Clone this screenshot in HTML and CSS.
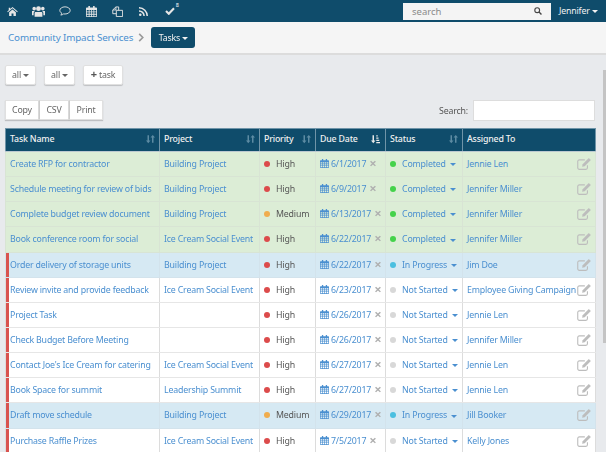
FILE: index.html
```html
<!DOCTYPE html>
<html lang="en">
<head>
<meta charset="utf-8">
<title>Tasks</title>
<link rel="stylesheet" href="styles.css">
</head>
<body>
<svg class="defs" width="0" height="0" aria-hidden="true">
  <symbol id="cal" viewBox="0 0 14 14"><path fill="currentColor" fill-rule="evenodd" d="M3 0h2v2h4V0h2v2h2a1 1 0 0 1 1 1v10a1 1 0 0 1-1 1H1a1 1 0 0 1-1-1V3a1 1 0 0 1 1-1h2zM1 5v2h2.500V5zm3.500 0v2h2V5zm3 0v2h2V5zm3 0v2H13V5zM1 8v2h2.500V8zm3.500 0v2h2V8zm3 0v2h2V8zm3 0v2H13V8zM1 11v2h2.500v-2zm3.500 0v2h2v-2zm3 0v2h2v-2zm3 0v2H13v-2z"/></symbol>
  <symbol id="edit" viewBox="0 0 16 14"><path fill="none" stroke="currentColor" stroke-width="1.300" d="M12 8.500V11.500a1.800 1.800 0 0 1-1.800 1.800H2.500A1.800 1.800 0 0 1 .7 11.500V4a1.800 1.800 0 0 1 1.800-1.800H9"/><path fill="currentColor" d="M13.600 0 16 2.400 8.800 9.600 5.800 10.200 6.400 7.200z"/></symbol>
  <symbol id="sort" viewBox="0 0 12 12"><path fill="currentColor" d="M2 1h2v7h2L3 11.500 0 8h2zM8 11V4H6l3-3.500L12 4h-2v7z"/></symbol>
</svg>

<header class="topbar">
  <nav class="topicons">
    <a class="topicon"><svg viewBox="0 0 14 12" width="11" height="9"><path fill="currentColor" d="M7 0 14 6l-.8.900L7 1.700.8 6.900 0 6l2-1.700V1h2v1.600zM2.500 7 7 3.200 11.500 7v5H8.300V8.500H5.700V12H2.500z"/></svg></a>
    <a class="topicon"><svg viewBox="0 0 16 13" width="13" height="11"><g fill="currentColor"><circle cx="8" cy="3" r="3"/><circle cx="2.700" cy="3" r="2.200"/><circle cx="13.300" cy="3" r="2.200"/><path d="M4 7h8l.8 1v5H3.200V8zM0 6h3.300L2 8v3H0zM16 6h-3.300L14 8v3h2z"/></g></svg></a>
    <a class="topicon"><svg viewBox="0 0 14 12" width="12" height="10"><path fill="none" stroke="currentColor" stroke-width="1.100" d="M7 1C3.500 1 .8 2.900.8 5.300c0 1.400.9 2.600 2.400 3.400-.2.900-.7 1.600-1.300 2.200 1.300-.1 2.500-.6 3.400-1.400.5.100 1.100.1 1.700.1 3.500 0 6.200-1.900 6.200-4.300S10.500 1 7 1z"/></svg></a>
    <a class="topicon"><svg viewBox="0 0 14 14" width="11" height="11"><use href="#cal"/></svg></a>
    <a class="topicon"><svg viewBox="0 0 14 14" width="11" height="11"><path fill="none" stroke="currentColor" stroke-width="1.200" d="M5.500 5.500h8v8h-8z M8.500 5.500V1.200H5L1 5v4.800h4.500 M5 1.200V5H1"/></svg></a>
    <a class="topicon"><svg viewBox="0 0 12 12" width="9" height="9"><g fill="none" stroke="currentColor" stroke-width="2"><path d="M0 5.200a6.800 6.800 0 0 1 6.800 6.800"/><path d="M0 1a11 11 0 0 1 11 11"/></g><circle cx="1.700" cy="10.300" r="1.700" fill="currentColor"/></svg></a>
    <a class="topicon"><svg viewBox="0 0 12 10" width="10" height="8"><path fill="none" stroke="currentColor" stroke-width="2.600" d="M1 5l3.500 3.500L11 1.500"/></svg><sup class="topcount">8</sup></a>
  </nav>
  <form class="topsearch">
    <span class="topsearch-text">search</span>
    <svg viewBox="0 0 10 10" width="8" height="8"><circle cx="4" cy="4" r="3" fill="none" stroke="#444" stroke-width="1.400"/><path d="M6 6l3.300 3.300" stroke="#444" stroke-width="1.700"/></svg>
  </form>
  <a class="user">Jennifer<span class="caret caret-white"></span></a>
</header>

<div class="crumbs">
  <a class="crumb-link">Community Impact Services</a>
  <svg class="crumb-sep" viewBox="0 0 6 10" width="6" height="9"><path fill="none" stroke="#9a9a9a" stroke-width="1.800" d="M1 1l4 4-4 4"/></svg>
  <button class="tasks-btn">Tasks<span class="caret caret-white"></span></button>
</div>

<main class="content">
  <div class="filters">
    <button class="btn btn-all">all<span class="caret"></span></button>
    <button class="btn btn-all">all<span class="caret"></span></button>
    <button class="btn btn-task"><b class="plus">+</b> task</button>
  </div>
  <div class="tools">
    <div class="btn-group">
      <button class="gbtn">Copy</button><button class="gbtn">CSV</button><button class="gbtn">Print</button>
    </div>
    <label class="searchbox">Search:<input class="searchinput" type="text"></label>
  </div>

  <table class="tasks">
    <colgroup>
      <col class="c1"><col class="c2"><col class="c3"><col class="c4"><col class="c5"><col class="c6">
    </colgroup>
    <thead>
      <tr>
        <th>Task Name<svg class="sort"><use href="#sort"/></svg></th>
        <th>Project<svg class="sort"><use href="#sort"/></svg></th>
        <th>Priority<svg class="sort"><use href="#sort"/></svg></th>
        <th>Due Date<svg class="sort sort-on" viewBox="0 0 12 12"><path fill="currentColor" d="M2 1h2v7h2L3 11.500 0 8h2zM7 1h2v1.500H7zM7 4h3v1.500H7zM7 7h4v1.500H7zM7 10h5v1.500H7z"/></svg></th>
        <th>Status<svg class="sort"><use href="#sort"/></svg></th>
        <th>Assigned To</th>
      </tr>
    </thead>
    <tbody>
      <tr class="done"><td><a>Create RFP for contractor</a></td><td><a>Building Project</a></td><td><i class="dot red"></i>High</td><td><svg class="cal"><use href="#cal"/></svg><a>6/1/2017</a><span class="x">×</span></td><td><i class="dot green"></i><a>Completed</a><span class="caret caret-blue"></span></td><td class="who"><a>Jennie Len</a><svg class="edit"><use href="#edit"/></svg></td></tr>
      <tr class="done"><td><a>Schedule meeting for review of bids</a></td><td><a>Building Project</a></td><td><i class="dot red"></i>High</td><td><svg class="cal"><use href="#cal"/></svg><a>6/9/2017</a><span class="x">×</span></td><td><i class="dot green"></i><a>Completed</a><span class="caret caret-blue"></span></td><td class="who"><a>Jennifer Miller</a><svg class="edit"><use href="#edit"/></svg></td></tr>
      <tr class="done"><td><a>Complete budget review document</a></td><td><a>Building Project</a></td><td><i class="dot orange"></i>Medium</td><td><svg class="cal"><use href="#cal"/></svg><a>6/13/2017</a><span class="x">×</span></td><td><i class="dot green"></i><a>Completed</a><span class="caret caret-blue"></span></td><td class="who"><a>Jennifer Miller</a><svg class="edit"><use href="#edit"/></svg></td></tr>
      <tr class="done"><td><a>Book conference room for social</a></td><td><a>Ice Cream Social Event</a></td><td><i class="dot red"></i>High</td><td><svg class="cal"><use href="#cal"/></svg><a>6/22/2017</a><span class="x">×</span></td><td><i class="dot green"></i><a>Completed</a><span class="caret caret-blue"></span></td><td class="who"><a>Jennifer Miller</a><svg class="edit"><use href="#edit"/></svg></td></tr>
      <tr class="late prog"><td><a>Order delivery of storage units</a></td><td><a>Building Project</a></td><td><i class="dot red"></i>High</td><td><svg class="cal"><use href="#cal"/></svg><a>6/22/2017</a><span class="x">×</span></td><td><i class="dot blue"></i><a>In Progress</a><span class="caret caret-blue"></span></td><td class="who"><a>Jim Doe</a><svg class="edit"><use href="#edit"/></svg></td></tr>
      <tr class="late"><td><a>Review invite and provide feedback</a></td><td><a>Ice Cream Social Event</a></td><td><i class="dot red"></i>High</td><td><svg class="cal"><use href="#cal"/></svg><a>6/23/2017</a><span class="x">×</span></td><td><i class="dot grey"></i><a>Not Started</a><span class="caret caret-blue"></span></td><td class="who"><a>Employee Giving Campaign</a><svg class="edit"><use href="#edit"/></svg></td></tr>
      <tr class="late"><td><a>Project Task</a></td><td></td><td><i class="dot red"></i>High</td><td><svg class="cal"><use href="#cal"/></svg><a>6/26/2017</a><span class="x">×</span></td><td><i class="dot grey"></i><a>Not Started</a><span class="caret caret-blue"></span></td><td class="who"><a>Jennie Len</a><svg class="edit"><use href="#edit"/></svg></td></tr>
      <tr class="late"><td><a>Check Budget Before Meeting</a></td><td></td><td><i class="dot red"></i>High</td><td><svg class="cal"><use href="#cal"/></svg><a>6/26/2017</a><span class="x">×</span></td><td><i class="dot grey"></i><a>Not Started</a><span class="caret caret-blue"></span></td><td class="who"><a>Jennifer Miller</a><svg class="edit"><use href="#edit"/></svg></td></tr>
      <tr class="late"><td><a>Contact Joe's Ice Cream for catering</a></td><td><a>Ice Cream Social Event</a></td><td><i class="dot red"></i>High</td><td><svg class="cal"><use href="#cal"/></svg><a>6/27/2017</a><span class="x">×</span></td><td><i class="dot grey"></i><a>Not Started</a><span class="caret caret-blue"></span></td><td class="who"><a>Jennie Len</a><svg class="edit"><use href="#edit"/></svg></td></tr>
      <tr class="late"><td><a>Book Space for summit</a></td><td><a>Leadership Summit</a></td><td><i class="dot red"></i>High</td><td><svg class="cal"><use href="#cal"/></svg><a>6/27/2017</a><span class="x">×</span></td><td><i class="dot grey"></i><a>Not Started</a><span class="caret caret-blue"></span></td><td class="who"><a>Jennie Len</a><svg class="edit"><use href="#edit"/></svg></td></tr>
      <tr class="late prog"><td><a>Draft move schedule</a></td><td><a>Building Project</a></td><td><i class="dot orange"></i>Medium</td><td><svg class="cal"><use href="#cal"/></svg><a>6/29/2017</a><span class="x">×</span></td><td><i class="dot blue"></i><a>In Progress</a><span class="caret caret-blue"></span></td><td class="who"><a>Jill Booker</a><svg class="edit"><use href="#edit"/></svg></td></tr>
      <tr class="late"><td><a>Purchase Raffle Prizes</a></td><td><a>Ice Cream Social Event</a></td><td><i class="dot red"></i>High</td><td><svg class="cal"><use href="#cal"/></svg><a>7/5/2017</a><span class="x">×</span></td><td><i class="dot grey"></i><a>Not Started</a><span class="caret caret-blue"></span></td><td class="who"><a>Kelly Jones</a><svg class="edit"><use href="#edit"/></svg></td></tr>
    </tbody>
  </table>
</main>
<div class="scrollthumb"></div>
</body>
</html>
```

FILE: styles.css
```css
* { box-sizing: border-box; }
html, body { margin: 0; padding: 0; height: 100%; overflow: hidden; }
body {
  font-family: "Noto Sans", "Open Sans", sans-serif;
  font-size: 8.800px;
  letter-spacing: -.18px;
  color: #555;
  background: #e8eaed;
  position: relative;
  filter: blur(.3px);
}
.defs { position: absolute; }
a { color: #4a8fd0; text-decoration: none; }

.topbar {
  height: 22px;
  background: #0f4c6b;
  display: flex;
  align-items: center;
}
.topicons { display: flex; flex: 1; margin-left: -1px; }
.topicon {
  width: 26.300px;
  height: 22px;
  display: flex;
  align-items: center;
  justify-content: center;
  color: #e6e6e6;
  position: relative;
}
.topcount {
  position: absolute;
  left: 19px;
  top: 2px;
  font-size: 5.500px;
  line-height: 7px;
  color: #fff;
}
.topsearch {
  width: 148px;
  height: 17px;
  margin: 0;
  background: #f4f4f4;
  display: flex;
  align-items: center;
  justify-content: space-between;
  padding: 0 9px;
}
.topsearch-text { font-size: 9.500px; color: #8a8a8a; letter-spacing: 0; }
.user { color: #f2f2f2; width: 55px; padding-left: 8px; white-space: nowrap; }
.caret {
  display: inline-block;
  margin-left: 2px;
  vertical-align: middle;
  border-left: 3px solid transparent;
  border-right: 3px solid transparent;
  border-top: 3px solid #666;
}
.caret-white { border-top-color: #f2f2f2; }
.caret-blue { border-top-color: #4a8fd0; margin-left: 4px; }

.crumbs {
  height: 33px;
  background: #f5f5f5;
  border-bottom: 2px solid #dcdcdc;
  display: flex;
  align-items: center;
  padding-left: 8px;
}
.crumb-link { font-size: 9.800px; letter-spacing: -.12px; color: #4a90d0; }
.crumb-sep { margin: 0 7px 0 5px; }
.tasks-btn {
  font: inherit;
  letter-spacing: inherit;
  width: 44px;
  height: 21px;
  background: #0f4c6b;
  color: #f2f2f2;
  border: 0;
  border-radius: 3px;
  padding: 0;
}

.content { padding: 10px 11px 0 5px; }
.filters { display: flex; gap: 8px; height: 20px; }
.btn {
  font: inherit;
  letter-spacing: inherit;
  color: #666;
  height: 20px;
  padding: 0;
  background: #fff;
  border: 1px solid #e0e0e0;
  border-radius: 2px;
  box-shadow: 0 1px 1px rgba(0,0,0,.18);
}
.btn-all { width: 31px; }
.btn-task { width: 40px; }
.plus { font-size: 11px; line-height: 8px; color: #555; }
.tools {
  display: flex;
  justify-content: space-between;
  align-items: flex-start;
  margin-top: 15px;
  height: 28px;
}
.btn-group { display: flex; }
.gbtn {
  font: inherit;
  letter-spacing: inherit;
  color: #666;
  height: 20px;
  padding: 0;
  background: #fff;
  border: 1px solid #e0e0e0;
  border-left-color: #ccc;
  box-shadow: 0 1px 1px rgba(0,0,0,.18);
}
.gbtn:first-child { width: 34px; border-left-color: #e0e0e0; }
.gbtn:nth-child(2) { width: 30px; }
.gbtn:last-child { width: 34px; }
.searchbox { display: flex; align-items: center; gap: 5px; color: #555; }
.searchinput {
  width: 122px;
  height: 21px;
  background: #fff;
  border: 1px solid #ddd;
  padding: 0;
}

.tasks {
  width: 590px;
  table-layout: fixed;
  border-collapse: collapse;
}
.c1 { width: 154px; }
.c2 { width: 100px; }
.c3 { width: 56px; }
.c4 { width: 70px; }
.c5 { width: 77px; }
.c6 { width: 133px; }
.tasks th {
  position: relative;
  height: 23px;
  background: #0f4c6b;
  color: #f0f0f0;
  font-weight: 500;
  text-align: left;
  padding: 0 4px 2px;
  border: 1px solid #6f94a8;
  border-bottom: 1px solid #bcc9d0;
  white-space: nowrap;
}
.sort {
  position: absolute;
  right: 4px;
  top: 5px;
  width: 9px;
  height: 10px;
  color: #5d8ba3;
}
.sort-on { color: #e8e8e8; right: 5px; }
.tasks td {
  height: 25.150px;
  padding: 0 4px;
  background: #fff;
  border: 1px solid #e6e6e6;
  border-top: 1px solid #ececec;
  border-left-color: #dcdcdc;
  border-right-color: #dcdcdc;
  white-space: nowrap;
  overflow: hidden;
}
.done td { background: #dcedd6; border-color: #d8e4d4; }
.prog td { background: #d6e9f3; border-color: #d3e3ec; }
.late td:first-child { box-shadow: inset 3px 0 0 #d9534f; }
.dot {
  display: inline-block;
  width: 6px;
  height: 6px;
  border-radius: 50%;
  margin-right: 6px;
}
.red { background: #dc4b4b; }
.green { background: #45d24b; }
.orange { background: #f0ad4e; }
.blue { background: #4bbfe0; }
.grey { background: #d8d8d8; }
.cal { width: 9px; height: 9px; color: #4a8fd0; margin-right: 2px; vertical-align: -1px; }
.x { color: #b0b0b0; font-size: 13px; font-weight: 700; line-height: 8px; margin-left: 3px; vertical-align: -1px; }
.who { position: relative; }
.edit {
  position: absolute;
  right: 4px;
  top: 6px;
  width: 14px;
  height: 12px;
  color: #bdbdbd;
}
.scrollthumb {
  position: absolute;
  right: 0;
  top: 70px;
  width: 3px;
  height: 273px;
  background: #c4c4c4;
}
```
